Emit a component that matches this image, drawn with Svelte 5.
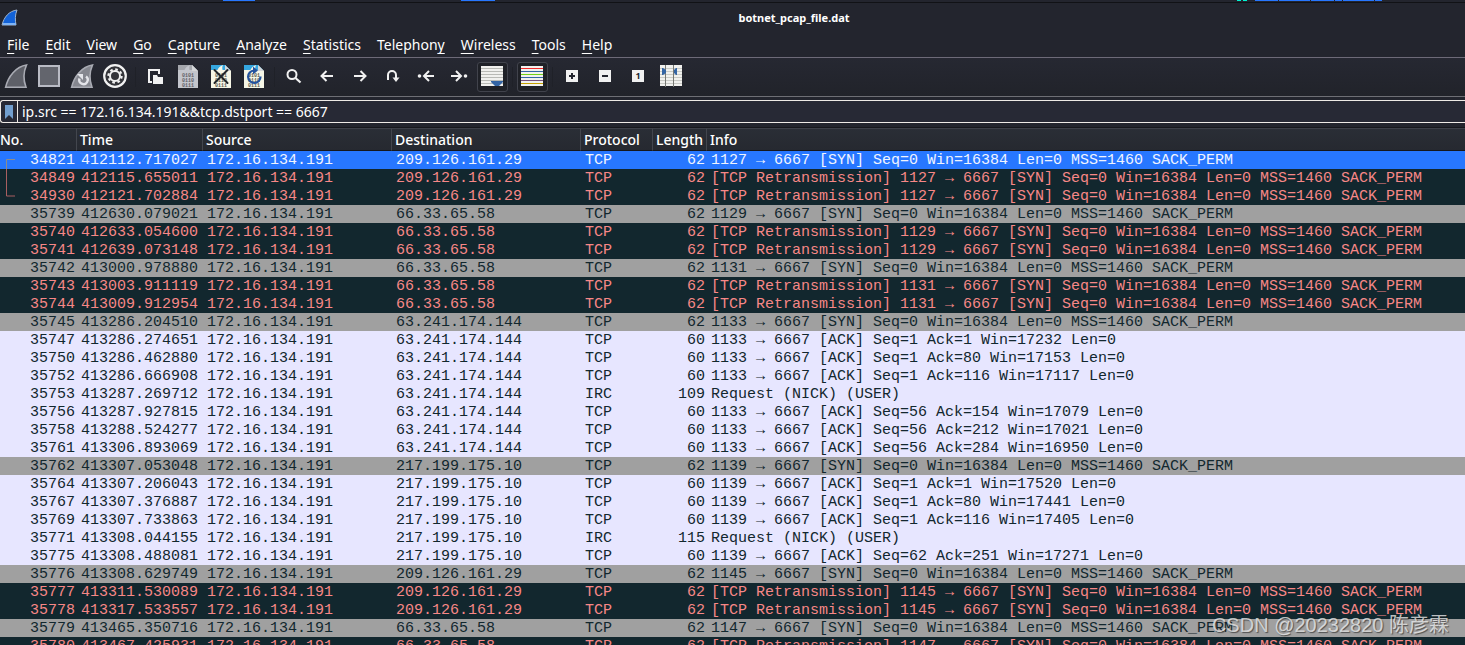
<script>
  const menus = [
    ['', 'F', 'ile'],
    ['', 'E', 'dit'],
    ['', 'V', 'iew'],
    ['', 'G', 'o'],
    ['', 'C', 'apture'],
    ['', 'A', 'nalyze'],
    ['', 'S', 'tatistics'],
    ['Telephon', 'y', ''],
    ['', 'W', 'ireless'],
    ['', 'T', 'ools'],
    ['', 'H', 'elp'],
  ];

  const tools = [
    'start', 'stop', 'restart', 'options', '|',
    'open', 'save', 'close', 'reload', '|',
    'find', 'back', 'forward', 'goto', 'first', 'last', 'autoscroll', '|',
    'colorize', '|',
    'zoom in', 'zoom out', 'normal size', 'resize columns',
  ];

  // workspace strip peeking out above the window: gap before, width, colour
  const marks = [
    { gap: 223, w: 32, c: '#2777ff' },
    { gap: 206, w: 34, c: '#2777ff' },
    { gap: 742, w: 4, c: '#00f5d4' },
    { gap: 2, w: 4, c: '#00f5d4' },
    { gap: 8, w: 23, c: '#2777ff' },
    { gap: 1, w: 31, c: '#2777ff' },
    { gap: 1, w: 23, c: '#2777ff' },
    { gap: 1, w: 7, c: '#2777ff' },
    { gap: 1, w: 31, c: '#2777ff' },
    { gap: 1, w: 7, c: '#2777ff' },
  ];

  const syn = (port) => `${port} → 6667 [SYN] Seq=0 Win=16384 Len=0 MSS=1460 SACK_PERM`;
  const retr = (port) => `[TCP Retransmission] ${syn(port)}`;
  const ack = (port, seq, a, win) => `${port} → 6667 [ACK] Seq=${seq} Ack=${a} Win=${win} Len=0`;
  const irc = 'Request (NICK) (USER)';

  const packets = [
    ['sel', 34821, '412112.717027', '209.126.161.29', 62, syn(1127)],
    ['bad', 34849, '412115.655011', '209.126.161.29', 62, retr(1127)],
    ['bad', 34930, '412121.702884', '209.126.161.29', 62, retr(1127)],
    ['syn', 35739, '412630.079021', '66.33.65.58', 62, syn(1129)],
    ['bad', 35740, '412633.054600', '66.33.65.58', 62, retr(1129)],
    ['bad', 35741, '412639.073148', '66.33.65.58', 62, retr(1129)],
    ['syn', 35742, '413000.978880', '66.33.65.58', 62, syn(1131)],
    ['bad', 35743, '413003.911119', '66.33.65.58', 62, retr(1131)],
    ['bad', 35744, '413009.912954', '66.33.65.58', 62, retr(1131)],
    ['syn', 35745, '413286.204510', '63.241.174.144', 62, syn(1133)],
    ['tcp', 35747, '413286.274651', '63.241.174.144', 60, ack(1133, 1, 1, 17232)],
    ['tcp', 35750, '413286.462880', '63.241.174.144', 60, ack(1133, 1, 80, 17153)],
    ['tcp', 35752, '413286.666908', '63.241.174.144', 60, ack(1133, 1, 116, 17117)],
    ['tcp', 35753, '413287.269712', '63.241.174.144', 109, irc],
    ['tcp', 35756, '413287.927815', '63.241.174.144', 60, ack(1133, 56, 154, 17079)],
    ['tcp', 35758, '413288.524277', '63.241.174.144', 60, ack(1133, 56, 212, 17021)],
    ['tcp', 35761, '413306.893069', '63.241.174.144', 60, ack(1133, 56, 284, 16950)],
    ['syn', 35762, '413307.053048', '217.199.175.10', 62, syn(1139)],
    ['tcp', 35764, '413307.206043', '217.199.175.10', 60, ack(1139, 1, 1, 17520)],
    ['tcp', 35767, '413307.376887', '217.199.175.10', 60, ack(1139, 1, 80, 17441)],
    ['tcp', 35769, '413307.733863', '217.199.175.10', 60, ack(1139, 1, 116, 17405)],
    ['tcp', 35771, '413308.044155', '217.199.175.10', 115, irc],
    ['tcp', 35775, '413308.488081', '217.199.175.10', 60, ack(1139, 62, 251, 17271)],
    ['syn', 35776, '413308.629749', '209.126.161.29', 62, syn(1145)],
    ['bad', 35777, '413311.530089', '209.126.161.29', 62, retr(1145)],
    ['bad', 35778, '413317.533557', '209.126.161.29', 62, retr(1145)],
    ['syn', 35779, '413465.350716', '66.33.65.58', 62, syn(1147)],
    ['bad', 35780, '413467.425931', '66.33.65.58', 62, retr(1147)],
  ];

  const headers = ['No.', 'Time', 'Source', 'Destination', 'Protocol', 'Length', 'Info'];

  let filter = $state('ip.src == 172.16.134.191&&tcp.dstport == 6667');
</script>

{#snippet page(top, paper, ink)}
  <path d="M2 1h14l6 6v17H2z" fill={paper} />
  <path d="M2 1h14l5 5H2z" fill={top} />
  <path d="M8 7c1-3 3-5 6-6-1 2-1 4 0 6z" fill={paper} />
  <path d="M16 1l6 6h-6z" fill="#d4d6d8" />
  <g font-family="Liberation Mono, monospace" font-size="5" font-weight="700" fill={ink}>
    <text x="6" y="13">0101</text>
    <text x="6" y="18">0110</text>
    <text x="6" y="23">0111</text>
  </g>
{/snippet}

{#snippet icon(name)}
  <svg width="25" height="26" viewBox="0 0 25 26" aria-hidden="true">
    {#if name === 'start' || name === 'restart'}
      <path
        d="M1.6 23.3C4 12.5 12 2.5 22.5 1C19.4 8 19.6 17 22 23.3Z"
        fill={name === 'start' ? '#5e6068' : '#85878f'}
        stroke="#a9abb3"
        stroke-width="1.6"
      />
      {#if name === 'restart'}
        <path d="M9.5 14.5a4.2 4.2 0 1 0 6.5-2" fill="none" stroke="#e4e5ea" stroke-width="2.4" />
        <path d="M7 10h6v6z" fill="#e4e5ea" />
      {/if}
    {:else if name === 'stop'}
      <rect x="2" y="2" width="20" height="20" fill="#63656d" stroke="#b9bbc4" stroke-width="2" />
    {:else if name === 'options'}
      <circle cx="12" cy="12" r="10.8" fill="#333439" stroke="#f1f1f1" stroke-width="2.2" />
      <circle cx="12" cy="12" r="6.6" fill="none" stroke="#f1f1f1" stroke-width="2.2" stroke-dasharray="2.6 2.584" />
      <circle cx="12" cy="12" r="5" fill="#333439" stroke="#f1f1f1" stroke-width="2" />
    {:else if name === 'open'}
      <path d="M9 18H6V6h10v4" fill="none" stroke="#f1f1f1" stroke-width="2" />
      <path d="M10 11h4l1 2h5v7H10z" fill="#f1f1f1" />
    {:else if name === 'save'}
      {@render page('#a5a7ad', '#c3c5cc', '#5f6168')}
    {:else if name === 'close'}
      {@render page('#35a7e0', '#f6f6e6', '#5c5c52')}
      <path d="M5.5 6l13 13M18.5 6l-13 13" stroke="#22262a" stroke-width="2" stroke-linecap="round" />
    {:else if name === 'reload'}
      {@render page('#35a7e0', '#f6f6e6', '#5c5c52')}
      <path d="M12 6.5a6.2 6.2 0 1 0 6.5 6" fill="none" stroke="#24539f" stroke-width="2.2" />
      <path d="M11 2.5l5 4-5 4z" fill="#24539f" />
    {:else if name === 'find'}
      <circle cx="10" cy="10.5" r="4.5" fill="none" stroke="#f1f1f1" stroke-width="2" />
      <path d="M13.5 14l5 4.500" stroke="#f1f1f1" stroke-width="2.2" />
    {:else if name === 'back'}
      <path d="M18 12H7M11.5 7l-5 5 5 5" fill="none" stroke="#f1f1f1" stroke-width="2" />
    {:else if name === 'forward'}
      <path d="M6 12h11M12.5 7l5 5-5 5" fill="none" stroke="#f1f1f1" stroke-width="2" />
    {:else if name === 'goto'}
      <path d="M7 16v-5a4 4 0 0 1 8 0v4" fill="none" stroke="#f1f1f1" stroke-width="2" />
      <path d="M11.5 13.5h7L15 18z" fill="#f1f1f1" />
    {:else if name === 'first'}
      <circle cx="5.5" cy="12" r="1.8" fill="#f1f1f1" />
      <path d="M20 12h-9M15 7l-5 5 5 5" fill="none" stroke="#f1f1f1" stroke-width="2" />
    {:else if name === 'last'}
      <circle cx="18.5" cy="12" r="1.8" fill="#f1f1f1" />
      <path d="M4 12h9M9 7l5 5-5 5" fill="none" stroke="#f1f1f1" stroke-width="2" />
    {:else if name === 'autoscroll'}
      <rect x="1" y="2" width="22" height="20" fill="#f1f1ee" />
      <path d="M1 4.5h22M1 7.5h22M1 10.5h22M1 13.5h22M1 16.5h22M1 19.5h22" stroke="#b9bab5" />
      <path d="M11 17h12v1l-4 4h-4l-4-4z" fill="#3465a4" />
    {:else if name === 'colorize'}
      <rect x="1" y="2" width="22" height="20" fill="#f1f1ee" />
      {#each ['#ef2929', '#3465a4', '#73d216', '#3465a4', '#75507b', '#c4a000'] as c, i}
        <rect x="1" y={4 + i * 3} width="22" height="1" fill={c} />
      {/each}
    {:else if name === 'resize columns'}
      <rect x="1" y="1" width="22" height="21" fill="#f1f1ee" />
      <path d="M1 4.5h22M1 7.5h22M1 10.5h22M1 13.5h22M1 16.5h22M1 19.5h22" stroke="#c9cac5" />
      <path d="M6.5 1v22M14.5 1v22" stroke="#777974" />
      <path d="M3 4h1l3 2v3l-3 2H3zM18 4h-1l-2 2v3l2 2h1z" fill="#3465a4" />
    {:else}
      <rect x="6" y="6" width="12" height="12" fill="#f1f1f1" />
      {#if name === 'zoom in'}
        <path d="M9 12h6M12 9v6" stroke="#23252e" stroke-width="2" />
      {:else if name === 'zoom out'}
        <path d="M9 12h6" stroke="#23252e" stroke-width="2" />
      {:else}
        <text x="12" y="15" text-anchor="middle" font-family="Noto Sans, sans-serif" font-size="9" font-weight="700" fill="#23252e">1</text>
      {/if}
    {/if}
  </svg>
{/snippet}

<main>
  <div class="strip">
    {#each marks as m}
      <span style="margin-left: {m.gap}px; width: {m.w}px; background: {m.c}"></span>
    {/each}
  </div>

  <header class="titlebar">
    <svg width="18" height="18" viewBox="0 0 18 18" aria-hidden="true">
      <path d="M1 16C3 8 8 2 16 1c-2 5-2 10-1 15z" fill="#1262d8" stroke="#9fb4cf" />
      <path d="M2 15h13" stroke="#7fb4f5" stroke-width="2" />
    </svg>
    <h1>botnet_pcap_file.dat</h1>
  </header>

  <nav class="menubar">
    {#each menus as [pre, key, post]}
      <button>{pre}<u>{key}</u>{post}</button>
    {/each}
  </nav>

  <div class="toolbar" role="toolbar" aria-label="Main toolbar">
    {#each tools as t}
      {#if t === '|'}
        <span class="sep"></span>
      {:else}
        <button class:checked={t === 'autoscroll' || t === 'colorize'} aria-label={t}>
          {@render icon(t)}
        </button>
      {/if}
    {/each}
  </div>

  <div class="filter">
    <button aria-label="Filter bookmarks">
      <svg width="8" height="14" viewBox="0 0 8 14" aria-hidden="true">
        <path d="M0 0h8v14l-4-4-4 4z" fill="#729fcf" />
      </svg>
    </button>
    <input type="text" aria-label="Display filter" spellcheck="false" bind:value={filter} />
  </div>

  <table>
    <colgroup>
      <col class="c-no" />
      <col class="c-time" />
      <col class="c-addr" />
      <col class="c-addr" />
      <col class="c-proto" />
      <col class="c-len" />
      <col />
    </colgroup>
    <thead>
      <tr>
        {#each headers as h}
          <th scope="col">{h}</th>
        {/each}
      </tr>
    </thead>
    <tbody>
      {#each packets as [kind, no, time, dst, len, info], i}
        <tr class={kind}>
          <td class="num">
            {#if i === 0}
              <svg class="related" width="10" height="38" viewBox="0 0 10 38" aria-hidden="true">
                <path d="M9 .5H.5V10" fill="none" stroke="#8c8c8c" />
                <path d="M.5 10v27H9" fill="none" stroke="#a85f60" />
              </svg>
            {/if}
            {no}
          </td>
          <td>{time}</td>
          <td>172.16.134.191</td>
          <td>{dst}</td>
          <td>{info === irc ? 'IRC' : 'TCP'}</td>
          <td class="num">{len}</td>
          <td>{info}</td>
        </tr>
      {/each}
    </tbody>
  </table>

  <div class="watermark">CSDN @20232820 陈彦霖</div>
</main>

<style>
  :global(body) {
    background: #23252e;
  }

  main {
    position: relative;
    height: 100vh;
    overflow: hidden;
    background: #23252e;
    color: #fff;
    font-family: 'Noto Sans', sans-serif;
    font-size: 14px;
  }

  button {
    margin: 0;
    padding: 0;
    border: none;
    background: none;
    color: inherit;
    font: inherit;
  }

  .strip {
    display: flex;
    height: 2px;
    border-bottom: 1px solid #111216;
  }
  .strip span {
    flex-shrink: 0;
    height: 1px;
  }

  .titlebar {
    display: flex;
    align-items: center;
    height: 29px;
    padding-left: 1px;
  }
  h1 {
    flex: 1;
    margin: 0;
    padding-left: 104px;
    text-align: center;
    font-size: 11px;
    font-weight: 700;
  }

  .menubar {
    display: flex;
    gap: 16px;
    height: 25px;
    padding-left: 7px;
    border-bottom: 1px solid #6d6a78;
  }
  .menubar button {
    line-height: 24px;
  }
  u {
    text-decoration-thickness: 1px;
    text-underline-offset: 3px;
    text-decoration-skip-ink: none;
  }

  /* Toolbar */
  .toolbar {
    display: flex;
    align-items: center;
    height: 38px;
    border-bottom: 1px solid #6e6f75;
    background: linear-gradient(#262832, #21232a);
  }
  .toolbar button {
    display: flex;
    align-items: center;
    justify-content: center;
    width: 33px;
    height: 30px;
  }
  .toolbar .checked {
    box-sizing: border-box;
    width: 31px;
    margin: 0 1px;
    border: 1px solid #41434c;
    border-radius: 3px;
    background: #1f2127;
  }
  .sep {
    width: 1px;
    height: 20px;
    margin: 0 3px;
    background: #1f2128;
  }

  /* Display filter */
  .filter {
    display: flex;
    height: 21px;
    margin: 3px 0 4px;
    border: 1px solid #eeeae6;
    border-right: none;
    border-radius: 3px 0 0 3px;
    background: #272935;
  }
  .filter button {
    display: flex;
    align-items: center;
    justify-content: center;
    width: 17px;
    border-right: 1px solid #eeeae6;
  }
  .filter input {
    flex: 1;
    min-width: 0;
    padding: 0 4px 1px;
    border: none;
    outline: none;
    background: none;
    color: #fff;
    font: inherit;
  }

  /* Packet list */
  table {
    width: 100%;
    table-layout: fixed;
    border-collapse: separate;
    border-spacing: 0;
    border-top: 1px solid #17181d;
  }
  .c-no { width: 77px; }
  .c-time { width: 126px; }
  .c-addr { width: 189px; }
  .c-proto { width: 72px; }
  .c-len { width: 54px; }

  th {
    height: 21px;
    padding: 0 0 0 3px;
    border-top: 1px solid #3d4049;
    border-right: 1px solid #43464e;
    border-bottom: 1px solid #16171b;
    background: linear-gradient(#2a2e36, #262930);
    text-align: left;
    font-weight: 500;
    line-height: 21px;
  }
  th:first-child { padding-left: 0; }
  th:last-child { border-right: none; }

  td {
    height: 17px;
    padding: 1px 0 0 4px;
    overflow: hidden;
    font-family: 'Liberation Mono', monospace;
    font-size: 15px;
    line-height: 17px;
    white-space: nowrap;
  }
  .num {
    position: relative;
    padding: 1px 2px 0 0;
    overflow: visible;
    text-align: right;
  }
  .related {
    position: absolute;
    top: 8px;
    left: 6px;
  }

  .sel { background: #2777ff; color: #f0f4ff; }
  .bad { background: #12272e; color: #f78787; }
  .syn { background: #a0a0a0; color: #12272e; }
  .tcp { background: #e7e6ff; color: #12272e; }

  .watermark {
    position: absolute;
    right: 16px;
    bottom: 6px;
    color: rgba(235, 235, 235, 0.8);
    font-family: 'Liberation Sans', 'Noto Sans CJK SC', sans-serif;
    font-size: 20px;
    line-height: 28px;
    text-shadow: 1px 1px 1px rgba(0, 0, 0, 0.5);
  }
</style>
